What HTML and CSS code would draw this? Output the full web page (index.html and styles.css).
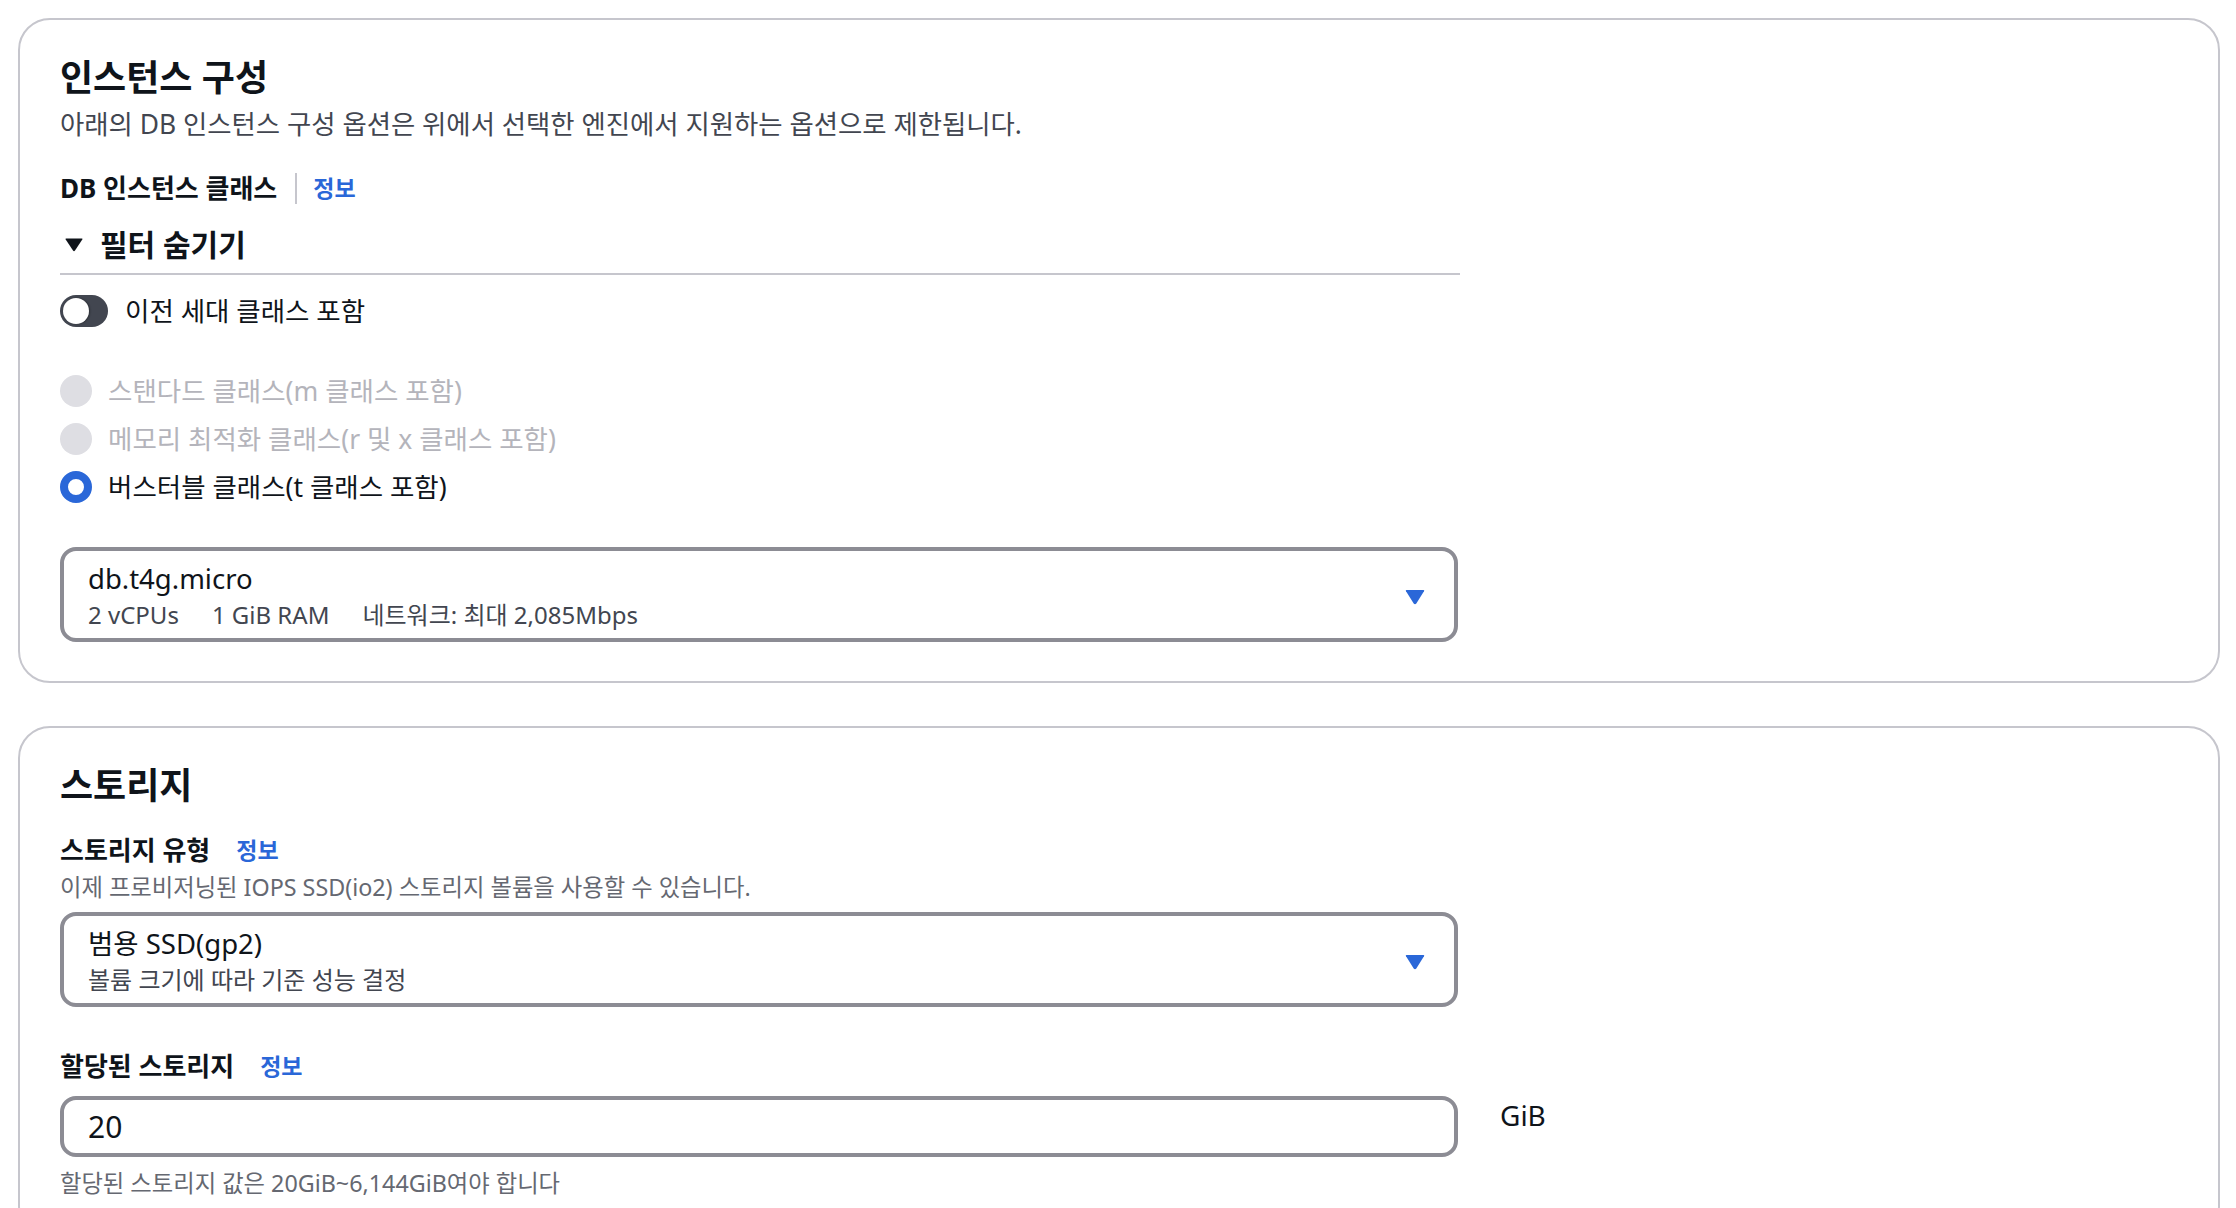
FILE: index.html
```html
<!DOCTYPE html>
<html lang="ko">
<head>
    <meta charset="UTF-8">
    <meta name="viewport" content="width=device-width, initial-scale=1.0">
    <title>인스턴스 구성</title>
    <link rel="stylesheet" href="styles.css">
</head>
<body>
    <div class="page">
        <section class="card">
            <h2 class="card-title">인스턴스 구성</h2>
            <p class="card-desc">아래의 DB 인스턴스 구성 옵션은 위에서 선택한 엔진에서 지원하는 옵션으로 제한됩니다.</p>

            <div class="form">
                <div class="field-label">
                    <span class="label-text">DB 인스턴스 클래스</span>
                    <span class="label-sep"></span>
                    <a class="info" href="#">정보</a>
                </div>

                <div class="filter-head">
                    <svg class="filter-caret" width="18" height="14" viewBox="0 0 18 14">
                        <path d="M1.2 0.5 H16.8 Q18 0.5 17.3 1.6 L10 12.6 Q9 14 8 12.6 L0.7 1.6 Q0 0.5 1.2 0.5 Z" fill="#0f141a"/>
                    </svg>
                    <span>필터 숨기기</span>
                </div>

                <div class="toggle-row">
                    <span class="toggle"><span class="knob"></span></span>
                    <span class="toggle-label">이전 세대 클래스 포함</span>
                </div>

                <div class="radio-group">
                    <div class="radio disabled">
                        <span class="dot"></span>
                        <span class="radio-label">스탠다드 클래스(m 클래스 포함)</span>
                    </div>
                    <div class="radio disabled">
                        <span class="dot"></span>
                        <span class="radio-label">메모리 최적화 클래스(r 및 x 클래스 포함)</span>
                    </div>
                    <div class="radio checked">
                        <span class="dot"></span>
                        <span class="radio-label">버스터블 클래스(t 클래스 포함)</span>
                    </div>
                </div>

                <div class="select select-class">
                    <div class="select-text">
                        <div class="sel-main">db.t4g.micro</div>
                        <div class="sel-sub">
                            <span>2 vCPUs</span>
                            <span>1 GiB RAM</span>
                            <span>네트워크: 최대 2,085Mbps</span>
                        </div>
                    </div>
                    <svg class="sel-caret" width="20" height="16" viewBox="0 0 20 16">
                        <path d="M1.6 1 H18.4 Q19.8 1 19 2.3 L11.3 14.4 Q10 16 8.7 14.4 L1 2.3 Q0.2 1 1.6 1 Z" fill="#2a67d8"/>
                    </svg>
                </div>
            </div>
        </section>

        <section class="card">
            <h2 class="card-title">스토리지</h2>

            <div class="form">
                <div class="field-label plain first">
                    <span class="label-text">스토리지 유형</span>
                    <a class="info" href="#">정보</a>
                </div>
                <p class="field-desc">이제 프로비저닝된 IOPS SSD(io2) 스토리지 볼륨을 사용할 수 있습니다.</p>

                <div class="select select-storage">
                    <div class="select-text">
                        <div class="sel-main">범용 SSD(gp2)</div>
                        <div class="sel-sub">
                            <span>볼륨 크기에 따라 기준 성능 결정</span>
                        </div>
                    </div>
                    <svg class="sel-caret" width="20" height="16" viewBox="0 0 20 16">
                        <path d="M1.6 1 H18.4 Q19.8 1 19 2.3 L11.3 14.4 Q10 16 8.7 14.4 L1 2.3 Q0.2 1 1.6 1 Z" fill="#2a67d8"/>
                    </svg>
                </div>

                <div class="field-label plain second">
                    <span class="label-text">할당된 스토리지</span>
                    <a class="info" href="#">정보</a>
                </div>

                <div class="input-row">
                    <input class="text-input" type="text" value="20">
                    <span class="unit">GiB</span>
                </div>
                <p class="field-desc constraint">할당된 스토리지 값은 20GiB~6,144GiB여야 합니다</p>
            </div>
        </section>
    </div>
</body>
</html>
```

FILE: styles.css
```css
:root {
    --text-color: #0f141a;
    --muted-color: #424650;
    --light-color: #656871;
    --border-color: #c6c6cd;
    --input-border: #8c8c94;
    --link-color: #2a67d8;
}

body {
    margin: 0;
    background: #ffffff;
    color: var(--text-color);
    font-family: "Noto Sans", "Open Sans", "Noto Sans CJK KR", sans-serif;
}

.page {
    display: flex;
    flex-direction: column;
    gap: 43px;
    padding: 18px 16px 0 18px;
}

.card {
    border: 2px solid var(--border-color);
    border-radius: 32px;
    padding: 36px 40px 39px;
}

.card-title {
    margin: 0;
    font-size: 36px;
    line-height: 44px;
    font-weight: 700;
}

.card-desc {
    margin: 7px 0 0;
    font-size: 26.4px;
    line-height: 34px;
    color: var(--muted-color);
}

.form {
    width: 1400px;
}

/* 필드 라벨 */
.field-label {
    display: flex;
    align-items: center;
    height: 34px;
    margin-top: 30px;
}

.field-label.first {
    margin-top: 25px;
}

.field-label.second {
    margin-top: 42px;
}

.label-text {
    font-size: 26px;
    line-height: 34px;
    font-weight: 700;
}

.label-sep {
    width: 2px;
    height: 31px;
    background: var(--border-color);
    margin: 0 16px 0 18px;
}

.info {
    font-size: 23px;
    line-height: 34px;
    font-weight: 700;
    color: var(--link-color);
    text-decoration: none;
}

.field-label.plain .info {
    margin-left: 26px;
}

/* 필터 */
.filter-head {
    display: flex;
    align-items: center;
    gap: 17px;
    margin-top: 20px;
    padding: 0 0 8px 5px;
    border-bottom: 2px solid var(--border-color);
    font-size: 30px;
    line-height: 40px;
    font-weight: 700;
}

.toggle-row {
    display: flex;
    align-items: center;
    gap: 17px;
    height: 32px;
    margin-top: 20px;
}

.toggle {
    display: flex;
    align-items: center;
    box-sizing: border-box;
    width: 48px;
    height: 32px;
    padding-left: 3px;
    border-radius: 16px;
    background: #424650;
}

.knob {
    width: 26px;
    height: 26px;
    border-radius: 50%;
    background: #ffffff;
    box-shadow: 1px 0 2px rgba(0, 0, 0, 0.35);
}

.toggle-label {
    font-size: 26.5px;
    line-height: 34px;
}

/* 라디오 */
.radio-group {
    margin-top: 40px;
}

.radio {
    display: flex;
    align-items: center;
    gap: 16px;
    height: 48px;
}

.dot {
    box-sizing: border-box;
    width: 32px;
    height: 32px;
    border-radius: 50%;
    flex-shrink: 0;
}

.radio.disabled .dot {
    background: #dedee3;
}

.radio.checked .dot {
    background: #ffffff;
    border: 8px solid var(--link-color);
}

.radio-label {
    font-size: 26.5px;
    line-height: 34px;
}

.radio.disabled .radio-label {
    color: #b4b4bb;
}

/* 셀렉트 */
.select {
    display: flex;
    align-items: flex-start;
    box-sizing: border-box;
    width: 1398px;
    height: 95px;
    margin-top: 36px;
    padding: 11px 29px 0 24px;
    border: 4px solid var(--input-border);
    border-radius: 16px;
}

.select.select-storage {
    margin-top: 10px;
}

.sel-main {
    font-size: 27.5px;
    line-height: 34px;
}

.sel-sub {
    display: flex;
    gap: 33px;
    margin-top: 3px;
    font-size: 24px;
    line-height: 32px;
    color: var(--muted-color);
}

.sel-caret {
    margin-left: auto;
    align-self: center;
    margin-top: -7px;
}

.field-desc {
    margin: 5px 0 0;
    font-size: 23.3px;
    line-height: 30px;
    color: var(--light-color);
}

.input-row {
    display: flex;
    align-items: flex-start;
    margin-top: 13px;
}

.text-input {
    flex-shrink: 0;
    box-sizing: border-box;
    width: 1398px;
    height: 61px;
    margin: 0;
    padding: 0 24px;
    border: 4px solid var(--input-border);
    border-radius: 16px;
    font-family: inherit;
    font-size: 30px;
    line-height: 53px;
    color: var(--text-color);
    background: #ffffff;
    outline: none;
}

.unit {
    flex-shrink: 0;
    margin-left: 42px;
    padding-top: 2px;
    font-size: 28px;
    line-height: 34px;
}

.field-desc.constraint {
    margin-top: 11px;
}
```
